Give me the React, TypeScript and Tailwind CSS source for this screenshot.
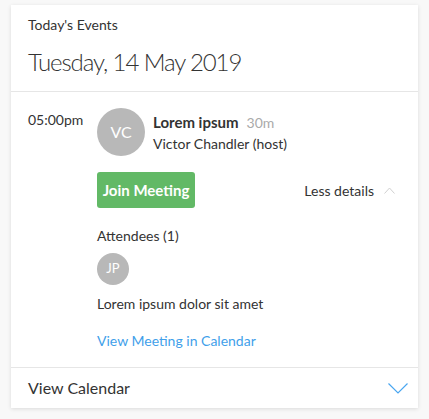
import React from "react";

export default function App() {
  return (
    <div
      className="min-h-screen bg-[#f8f8f8] pt-[5px] pl-[11px] text-[#333]"
      style={{ fontFamily: 'Lato, "Open Sans", sans-serif' }}
    >
      <div className="w-[407px] bg-white shadow-[0_1px_4px_rgba(0,0,0,0.12)]">
        {/* Header */}
        <div className="px-[17px] pt-[10px] pb-[12px] border-b border-[#e6e6e6]">
          <div className="text-[14px] leading-[20px]">Today's Events</div>
          <div className="mt-[10px] text-[24px] leading-[34px] font-light tracking-[-1.1px] text-[#333]">
            Tuesday, 14 May 2019
          </div>
        </div>

        {/* Body */}
        <div className="flex pl-[17px] pr-[23px] pt-[16px] pb-[16px] border-b border-[#e6e6e6]">
          <div className="w-[69px] shrink-0 pt-[2px] text-[14px] leading-[20px]">05:00pm</div>
          <div className="flex-1 flex flex-col">
            <div className="flex gap-[8px]">
              <div className="w-[48px] h-[48px] rounded-full bg-[#b8b8b8] text-white flex items-center justify-center text-[16px]">
                VC
              </div>
              <div className="pt-[4px]">
                <div className="text-[15px] leading-[20px]">
                  <span className="font-bold">Lorem ipsum</span>
                  <span className="ml-[8px] text-[14px] text-[#aaa]">30m</span>
                </div>
                <div className="text-[14px] leading-[22px]">Victor Chandler (host)</div>
              </div>
            </div>
            <div className="mt-[16px] flex items-center justify-between">
              <button className="h-[36px] w-[98px] rounded-[3px] bg-[#62b966] text-white font-bold text-[15px]">
                Join Meeting
              </button>
              <div className="flex items-center gap-[10px] text-[14px]">
                <span>Less details</span>
                <svg width="11" height="7" viewBox="0 0 11 7" fill="none">
                  <path d="M0.5 6.5 L5.5 1 L10.5 6.5" stroke="#d0d0d0" strokeWidth="1" />
                </svg>
              </div>
            </div>
            <div className="mt-[18px] text-[14px] leading-[20px]">Attendees (1)</div>
            <div className="mt-[7px] w-[32px] h-[32px] rounded-full bg-[#b8b8b8] text-white flex items-center justify-center text-[13px]">
              JP
            </div>
            <div className="mt-[9px] text-[14px] leading-[20px]">Lorem ipsum dolor sit amet</div>
            <div className="mt-[17px] text-[14px] leading-[20px] text-[#3f9fea]">
              View Meeting in Calendar
            </div>
          </div>
        </div>

        {/* Footer */}
        <div className="h-[40px] flex items-center justify-between pl-[17px] pr-[10px]">
          <span className="text-[16px]">View Calendar</span>
          <svg width="20" height="11" viewBox="0 0 20 11" fill="none">
            <path d="M0.5 0.5 L10 10 L19.5 0.5" stroke="#4aa6f0" strokeWidth="1.2" />
          </svg>
        </div>
      </div>
    </div>
  );
}
